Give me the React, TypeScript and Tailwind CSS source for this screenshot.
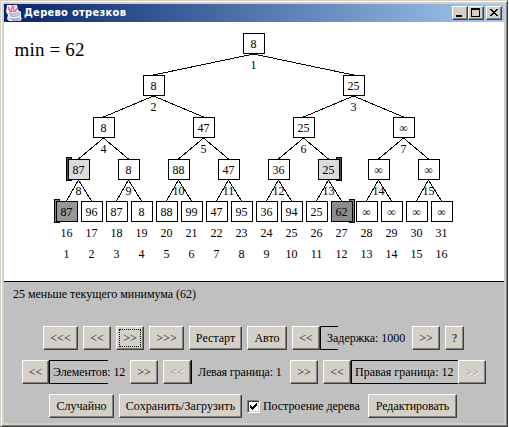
import type { ReactNode } from "react";

const INF = "∞";
const levels = [
  { y: 33, first: 254, step: 200, values: ["8"] },
  { y: 75, first: 154, step: 200, values: ["8", "25"] },
  { y: 117, first: 104, step: 100, values: ["8", "47", "25", INF] },
  { y: 159, first: 79, step: 50, values: ["87", "8", "88", "47", "36", "25", INF, INF] },
  {
    y: 201,
    first: 67,
    step: 25,
    values: ["87", "96", "87", "8", "88", "99", "47", "95", "36", "94", "25", "62", INF, INF, INF, INF],
  },
];

const fills: Record<number, string> = { 8: "#dcdcdc", 13: "#dcdcdc", 16: "#969696", 27: "#8c8c8c" };

function Bracket({ x, y, right = false, fill }: { x: number; y: number; right?: boolean; fill: string }) {
  const d = right
    ? `M${x + 5.5} ${y + 0.5}h-5v3h2v17h-2v3h5z`
    : `M${x + 0.5} ${y + 0.5}h5v3h-2v17h2v3h-5z`;
  return <path d={d} fill={fill} stroke="#000" shapeRendering="crispEdges" />;
}

function Tree() {
  return (
    <svg
      width="500"
      height="258"
      viewBox="4 23 500 258"
      className="block font-['Liberation_Serif',serif] text-[12px]"
      textAnchor="middle"
    >
      <text x="14.5" y="56" textAnchor="start" fontSize="19" textLength="70">
        min = 62
      </text>
      <Bracket x={66} y={157} fill="#505050" />
      <Bracket x={336} y={157} right fill="#505050" />
      <Bracket x={54} y={199} fill="#808080" />
      <Bracket x={349} y={199} right fill="#808080" />
      {levels.map((level, depth) =>
        level.values.map((value, i) => {
          const x = level.first + i * level.step;
          const id = 2 ** depth + i;
          const next = levels[depth + 1];
          return (
            <g key={id}>
              {next &&
                [0, 1].map((side) => (
                  <line
                    key={side}
                    x1={x - 0.5}
                    y1={level.y + 21}
                    x2={next.first + (2 * i + side) * next.step - 0.5}
                    y2={next.y}
                    stroke="#000"
                    shapeRendering="crispEdges"
                  />
                ))}
              <rect
                x={x - 10.5}
                y={level.y + 0.5}
                width="21"
                height="20"
                fill={fills[id] ?? "#fff"}
                stroke="#000"
                shapeRendering="crispEdges"
              />
              <text x={x - 0.5} y={level.y + 15}>
                {value}
              </text>
              <text x={x - 0.5} y={level.y + 36}>
                {id}
              </text>
              {depth === 4 && (
                <text x={x - 0.5} y="258">
                  {i + 1}
                </text>
              )}
            </g>
          );
        }),
      )}
    </svg>
  );
}

function Btn({ w, children, disabled = false, focused = false }: { w: string; children: ReactNode; disabled?: boolean; focused?: boolean }) {
  return (
    <button
      className={`relative flex h-6 shrink-0 items-center justify-center whitespace-nowrap border border-t-white border-l-white border-r-[#404040] border-b-[#404040] bg-[#d4d0c8] pb-px shadow-[inset_-1px_-1px_0_#808080] ${w} ${
        disabled ? "text-[#808080] [text-shadow:1px_1px_0_#fff]" : "text-black"
      }`}
    >
      {children}
      {focused && <span className="absolute inset-[2px] border border-dotted border-black" />}
    </button>
  );
}

function Caption({ w, children }: { w: string; children: ReactNode }) {
  return <span className={`shrink-0 whitespace-nowrap ${w}`}>{children}</span>;
}

function WinButton({ children }: { children: ReactNode }) {
  return (
    <button className="h-[14px] w-4 border border-t-white border-l-white border-r-[#404040] border-b-[#404040] bg-[#d4d0c8] shadow-[inset_-1px_-1px_0_#808080]">
      <svg width="14" height="12" fill="none" stroke="#000" shapeRendering="crispEdges">
        {children}
      </svg>
    </button>
  );
}

function JavaIcon() {
  return (
    <svg width="16" height="16" viewBox="0 0 16 16" className="mr-[2px] shrink-0" fill="none">
      <path d="M1 0h10l1 5 3 2v5l1 2-2 2H3l-2-2 1-4-2-3z" fill="#f4eef8" />
      <path d="M6 0C8 2 3 4 6 7M9 1C5 4 10 4 7 7M3 2c-2 2 2 3 1 5M11 3l-2 4" stroke="#e8657c" strokeWidth="1.4" />
      <path d="M3 8c2 2 7 1 8 0M4 10.500c2 1 5 1 8 0M11 8c4-1 3 2 1 2M3 13c3 2 8 1 11 0M6 15h8" stroke="#7d87c8" strokeWidth="1" />
    </svg>
  );
}

export default function App() {
  return (
    <div className="flex h-[427px] w-[509px] bg-white font-['Liberation_Serif',serif] text-[12px] leading-[14px] text-black">
      <div className="flex h-[427px] w-[508px] flex-col border-t border-r border-b border-t-[#d4d0c8] border-r-[#404040] border-b-[#404040] border-l border-l-[#d4d0c8] bg-[#d4d0c8] pl-[3px] pt-[3px] pr-[3px] shadow-[inset_1px_1px_0_#fff,inset_-1px_-1px_0_#808080]">
        <header className="flex h-[18px] w-[500px] items-center bg-linear-to-r from-[#0a246a] to-[#a6caf0] pl-[2px] pr-[2px]">
          <JavaIcon />
          <span className="flex-1 whitespace-nowrap pb-px font-['DejaVu_Sans_Condensed','DejaVu_Sans',sans-serif] text-[11px] font-bold tracking-[0.3px] text-white">
            Дерево отрезков
          </span>
          <div className="flex">
            <WinButton>
              <path d="M3 8h6v2H3z" fill="#000" stroke="none" />
            </WinButton>
            <WinButton>
              <path d="M2.500 1.500h8v8h-8zM2 2.500h9" />
            </WinButton>
            <div className="ml-[2px] flex">
              <WinButton>
                <path d="M3 2l7 7M4 2l7 7M10 2l-7 7M11 2l-7 7" shapeRendering="auto" />
              </WinButton>
            </div>
          </div>
        </header>
        <main className="h-[260px] w-[500px] border-b border-black bg-white pt-px">
          <Tree />
        </main>
        <section className="h-[141px] w-[500px] bg-[#c0c0c0]">
          <p className="h-11 pl-[9px] pt-[5px] tracking-[-0.03px]">25 меньше текущего минимума (62)</p>
          <div className="flex h-6 items-center gap-[5px] pl-[39px]">
            <Btn w="w-[35px]">&lt;&lt;&lt;</Btn>
            <Btn w="w-7">&lt;&lt;</Btn>
            <Btn w="w-7" focused>&gt;&gt;</Btn>
            <Btn w="w-[35px]">&gt;&gt;&gt;</Btn>
            <Btn w="w-[53px]">Рестарт</Btn>
            <Btn w="w-10">Авто</Btn>
            <div className="flex items-center">
              <Btn w="w-7">&lt;&lt;</Btn>
              <span className="h-6 w-[18px] border-y border-l border-black" />
              <Caption w="-ml-[11px] w-[85px]">Задержка: 1000</Caption>
              <Btn w="w-7">&gt;&gt;</Btn>
            </div>
            <Btn w="w-[19px]">?</Btn>
          </div>
          <div className="mt-[10px] flex h-6 items-center pl-[18px]">
            <Btn w="w-[27px]">&lt;&lt;</Btn>
            <span className="h-6 w-[59px] border-y border-l border-black" />
            <Caption w="-ml-[55px] w-[77px] tracking-[-0.1px]">Элементов: 12</Caption>
            <Btn w="w-7">&gt;&gt;</Btn>
            <div className="ml-[5px] flex border-r border-black">
              <Btn w="w-7" disabled>&lt;&lt;</Btn>
            </div>
            <Caption w="ml-[6px] w-[92px] tracking-[-0.15px]">Левая граница: 1</Caption>
            <Btn w="w-7">&gt;&gt;</Btn>
            <div className="ml-[5px] flex">
              <Btn w="w-7">&lt;&lt;</Btn>
              <span className="flex h-6 w-[107px] items-center whitespace-nowrap border-y border-l border-black pl-[3px]">
                Правая граница: 12
              </span>
              <Btn w="w-7" disabled>&gt;&gt;</Btn>
            </div>
          </div>
          <div className="mt-[10px] flex h-6 items-center gap-[5px] pl-[45px]">
            <Btn w="w-[65px]">Случайно</Btn>
            <Btn w="w-[123px]"><span className="tracking-[0.08px]">Сохранить/Загрузить</span></Btn>
            <label className="flex w-[116px] items-center gap-[3px] whitespace-nowrap tracking-[-0.07px]">
              <span className="h-[13px] w-[13px] shrink-0 border border-t-[#808080] border-l-[#808080] border-r-white border-b-white bg-white shadow-[inset_1px_1px_0_#404040,inset_-1px_-1px_0_#d4d0c8]">
                <svg width="11" height="11" fill="#000" shapeRendering="crispEdges">
                  <path d="M2 4l2 2 5-5v3l-5 5-2-2z" />
                </svg>
              </span>
              Построение дерева
            </label>
            <Btn w="w-[89px]">Редактировать</Btn>
          </div>
        </section>
      </div>
    </div>
  );
}
